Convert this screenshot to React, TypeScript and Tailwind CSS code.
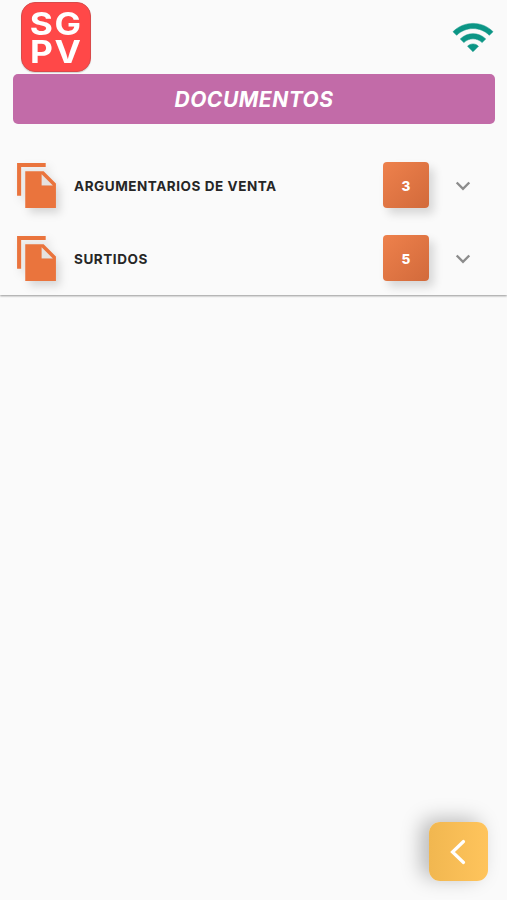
type Section = {
  name: string;
  count: number;
};

const sections: Section[] = [
  { name: "ARGUMENTARIOS DE VENTA", count: 3 },
  { name: "SURTIDOS", count: 5 }
];

function Logo() {
  return (
    <div className="flex h-[70px] w-[70px] justify-center rounded-[14px] border border-[#d94a4a] bg-[#ff4848] pt-[7px] text-white shadow-[0_1px_1px_rgba(0,0,0,0.15)]">
      <p className="-mr-px scale-x-[1.14] text-center text-[31px] font-bold leading-[28px] tracking-[1.5px]">
        SG
        <br />
        PV
      </p>
    </div>
  );
}

function WifiIcon() {
  return (
    <svg
      viewBox="1 4.4 22 15.6"
      className="h-[29px] w-10 overflow-visible fill-[#0b9585] stroke-[#0b9585] stroke-[0.3] [stroke-linejoin:round]"
    >
      <path d="M1 9l2 2c4.97-4.97 13.03-4.97 18 0l2-2C16.93 2.93 7.08 2.93 1 9zm8 8l3 3 3-3c-1.65-1.66-4.34-1.66-6 0zm-4-4l2 2c2.76-2.76 7.24-2.76 10 0l2-2C15.14 9.14 8.87 9.14 5 13z" />
    </svg>
  );
}

function FilesIcon() {
  return (
    <svg viewBox="2 1 19 22" className="h-[45px] w-[39px] overflow-visible fill-[#ea743d] drop-shadow-[4px_5px_4px_rgba(0,0,0,0.14)]">
      <path d="M13.5 6H20v6h-6.5z" className="fill-[#e6e2e0] [clip-path:polygon(0_0,100%_100%,0_100%)]" />
      <path d="M16 1H2v16h2V3h12V1zm-1 4l6 6v12H6V5h9zm-1 7h5.5L14 6.5V12z" />
    </svg>
  );
}

function SectionRow({ name, count }: Section) {
  return (
    <button type="button" className="flex h-[73px] w-full items-center pl-[17px] pr-9 text-left">
      <FilesIcon />
      <span className="ml-[18px] flex-1 whitespace-nowrap pt-[2px] text-[13.5px] font-bold tracking-[0.55px] text-[#262626]">
        {name}
      </span>
      <span className="mb-px flex h-[46px] w-[46px] items-center justify-center rounded-[4px] bg-linear-to-br from-[#ee814c] to-[#d26a3b] pt-[3px] text-[13.5px] font-extrabold text-white shadow-[5px_6px_10px_rgba(0,0,0,0.14)]">
        {count}
      </span>
      <svg viewBox="0 0 16 10" className="ml-[26px] h-[10px] w-4 fill-none stroke-[#8c8c8c] stroke-[2.4]">
        <path d="M1.7 1.5L8 7.8l6.3-6.3" />
      </svg>
    </button>
  );
}

export default function App() {
  return (
    <div className="flex h-[900px] w-full flex-col overflow-hidden bg-[#fafafa] font-[Inter,sans-serif]">
      <header className="flex h-[74px] shrink-0 items-start justify-between pl-[21px] pr-[14px] pt-[2px]">
        <Logo />
        <div className="pt-[21px]">
          <WifiIcon />
        </div>
      </header>

      <h1 className="mx-[13px] flex h-[50px] w-[482px] shrink-0 items-center justify-center rounded-[5px] bg-[#c26ba8] pt-px text-[21px] font-bold italic tracking-[0.5px] text-white">
        DOCUMENTOS
      </h1>

      <main className="mt-[25px] h-[146px] shrink-0 shadow-[0_1px_2px_rgba(0,0,0,0.4)] [clip-path:inset(0_0_-6px_0)]">
        {sections.map((section) => (
          <SectionRow key={section.name} {...section} />
        ))}
      </main>

      <footer className="mt-auto flex justify-end pb-[19px] pr-[19px]">
        <button
          type="button"
          className="flex h-[59px] w-[59px] items-center justify-center rounded-[11px] bg-linear-to-r from-[#f1b750] to-[#ffc45c] shadow-[-8px_-3px_20px_rgba(0,0,0,0.26)]"
        >
          <svg viewBox="0 0 16 26" className="mr-[2px] h-[26px] w-4 fill-none stroke-white stroke-[3.2] [stroke-linecap:round]">
            <path d="M13.5 2.5L2.5 13l11 10.5" />
          </svg>
        </button>
      </footer>
    </div>
  );
}
